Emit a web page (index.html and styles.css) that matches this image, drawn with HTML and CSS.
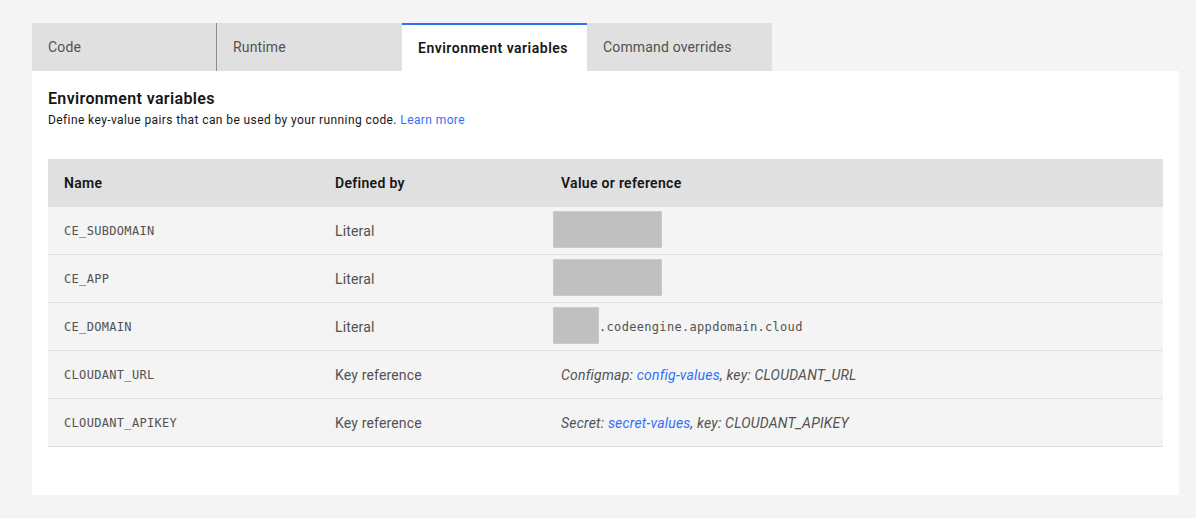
FILE: index.html
```html
<!DOCTYPE html>
<html lang="en">
<head>
<meta charset="utf-8">
<title>Environment variables</title>
<link rel="stylesheet" href="styles.css">
</head>
<body>
<div class="wrap">
  <nav class="tabs">
    <div class="tab divider">Code</div>
    <div class="tab">Runtime</div>
    <div class="tab active">Environment variables</div>
    <div class="tab">Command overrides</div>
  </nav>
  <section class="panel">
    <h2 class="title">Environment variables</h2>
    <p class="desc">Define key-value pairs that can be used by your running code. <a class="link" href="#">Learn more</a></p>
    <div class="table">
      <div class="row head">
        <div class="cell c1">Name</div>
        <div class="cell c2">Defined by</div>
        <div class="cell c3">Value or reference</div>
      </div>
      <div class="row">
        <div class="cell c1 mono">CE_SUBDOMAIN</div>
        <div class="cell c2">Literal</div>
        <div class="cell c3"><span class="redact r-wide"></span></div>
      </div>
      <div class="row">
        <div class="cell c1 mono">CE_APP</div>
        <div class="cell c2">Literal</div>
        <div class="cell c3"><span class="redact r-wide"></span></div>
      </div>
      <div class="row">
        <div class="cell c1 mono">CE_DOMAIN</div>
        <div class="cell c2">Literal</div>
        <div class="cell c3"><span class="redact r-small"></span><span class="mono">.codeengine.appdomain.cloud</span></div>
      </div>
      <div class="row">
        <div class="cell c1 mono">CLOUDANT_URL</div>
        <div class="cell c2">Key reference</div>
        <div class="cell c3"><span class="ital">Configmap: <a class="link" href="#">config-values</a>, key: CLOUDANT_URL</span></div>
      </div>
      <div class="row">
        <div class="cell c1 mono">CLOUDANT_APIKEY</div>
        <div class="cell c2">Key reference</div>
        <div class="cell c3"><span class="ital">Secret: <a class="link" href="#">secret-values</a>, key: CLOUDANT_APIKEY</span></div>
      </div>
    </div>
  </section>
</div>
</body>
</html>
```

FILE: styles.css
```css
* { box-sizing: border-box; }
html, body { margin: 0; padding: 0; }
body {
  background: #f4f4f4;
  font-family: "Roboto", "Liberation Sans", sans-serif;
  color: #161616;
}
.wrap {
  margin: 23px 17px 0 32px;
}
.tabs {
  display: flex;
  height: 48px;
}
.tab {
  width: 185px;
  height: 48px;
  background: #e0e0e0;
  color: #525252;
  font-size: 14px;
  letter-spacing: 0.16px;
  display: flex;
  align-items: center;
  padding: 0 16px;
}
.tab.divider { border-right: 1px solid #8d8d8d; }
.tab.active {
  background: #ffffff;
  color: #161616;
  font-weight: 600;
  letter-spacing: 0.5px;
  border-top: 2px solid #3270f5;
}
.panel {
  background: #ffffff;
  padding: 17px 16px 48px 16px;
}
.title {
  margin: 0;
  font-size: 16px;
  line-height: 22px;
  font-weight: 600;
  letter-spacing: 0.35px;
}
.desc {
  margin: 2px 0 31px 0;
  font-size: 12px;
  line-height: 16px;
  letter-spacing: 0.4px;
  color: #161616;
}
.link {
  color: #3270f5;
  text-decoration: none;
}
.table {
  display: flex;
  flex-direction: column;
}
.row {
  display: flex;
  height: 48px;
  background: #f4f4f4;
  border-bottom: 1px solid #e0e0e0;
}
.row.head {
  background: #e0e0e0;
  border-bottom: none;
}
.cell {
  display: flex;
  align-items: center;
  padding: 0 16px;
  font-size: 14px;
  letter-spacing: 0.16px;
  color: #525252;
  white-space: nowrap;
}
.row.head .cell {
  color: #161616;
  font-weight: 600;
  letter-spacing: 0.3px;
}
.c1 { width: 271px; }
.c2 { width: 226px; }
.c3 { flex: 1; }
.mono {
  font-family: "DejaVu Sans Mono", "Liberation Mono", monospace;
  font-size: 12px;
  letter-spacing: 0.32px;
  color: #525252;
}
.ital {
  font-style: italic;
  letter-spacing: 0.2px;
}
.redact {
  display: inline-block;
  background: #c0c0c0;
  border: 1px solid #cacaca;
  margin-left: -8px;
  margin-top: -2px;
  flex: none;
}
.r-wide { width: 109px; height: 37px; }
.r-small { width: 46px; height: 37px; }
```
